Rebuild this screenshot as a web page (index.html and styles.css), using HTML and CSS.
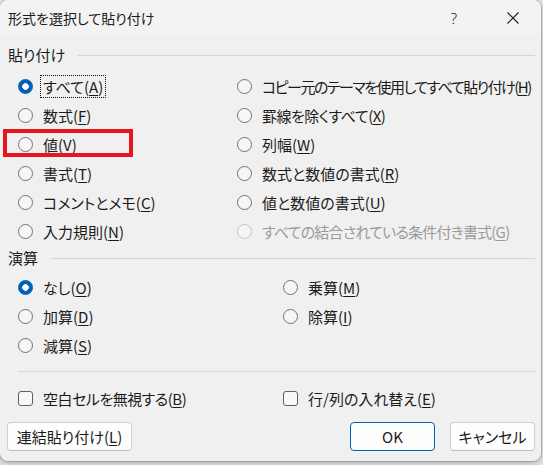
FILE: index.html
```html
<!DOCTYPE html>
<html lang="ja">
<head>
<meta charset="utf-8">
<title>形式を選択して貼り付け</title>
<link rel="stylesheet" href="styles.css">
</head>
<body>
<div class="dialog">
  <div class="titlebar">
    <span class="title">形式を選択して貼り付け</span>
    <span class="help">?</span>
    <span class="close"><svg width="12" height="12" viewBox="0 0 12 12"><path d="M0.5 0.5L11.5 11.5M11.5 0.5L0.5 11.5" stroke="#1a1a1a" stroke-width="1.1" fill="none"/></svg></span>
  </div>
  <div class="content">
    <div class="group-head"><span>貼り付け</span><span class="rule"></span></div>
    <div class="grid paste">
      <div class="opt"><span class="radio on"></span><span class="lbl focus">すべて(<u>A</u>)</span></div>
      <div class="opt"><span class="radio"></span><span class="lbl tightest">コピー元のテーマを使用してすべて貼り付け(<u>H</u>)</span></div>
      <div class="opt"><span class="radio"></span><span class="lbl">数式(<u>F</u>)</span></div>
      <div class="opt"><span class="radio"></span><span class="lbl tight">罫線を除くすべて(<u>X</u>)</span></div>
      <div class="opt"><span class="radio"></span><span class="lbl">値(<u>V</u>)</span></div>
      <div class="opt"><span class="radio"></span><span class="lbl">列幅(<u>W</u>)</span></div>
      <div class="opt"><span class="radio"></span><span class="lbl">書式(<u>T</u>)</span></div>
      <div class="opt"><span class="radio"></span><span class="lbl">数式と数値の書式(<u>R</u>)</span></div>
      <div class="opt"><span class="radio"></span><span class="lbl">コメントとメモ(<u>C</u>)</span></div>
      <div class="opt"><span class="radio"></span><span class="lbl">値と数値の書式(<u>U</u>)</span></div>
      <div class="opt"><span class="radio"></span><span class="lbl">入力規則(<u>N</u>)</span></div>
      <div class="opt disabled"><span class="radio"></span><span class="lbl tighter">すべての結合されている条件付き書式(<u>G</u>)</span></div>
    </div>
    <div class="group-head calc-head"><span>演算</span><span class="rule"></span></div>
    <div class="grid calc">
      <div class="opt"><span class="radio on"></span><span class="lbl">なし(<u>O</u>)</span></div>
      <div class="opt"><span class="radio"></span><span class="lbl">乗算(<u>M</u>)</span></div>
      <div class="opt"><span class="radio"></span><span class="lbl">加算(<u>D</u>)</span></div>
      <div class="opt"><span class="radio"></span><span class="lbl">除算(<u>I</u>)</span></div>
      <div class="opt"><span class="radio"></span><span class="lbl">減算(<u>S</u>)</span></div>
    </div>
    <div class="separator"></div>
    <div class="grid checks">
      <div class="opt"><span class="check"></span><span class="lbl tight">空白セルを無視する(<u>B</u>)</span></div>
      <div class="opt"><span class="check"></span><span class="lbl">行/列の入れ替え(<u>E</u>)</span></div>
    </div>
    <div class="buttons">
      <button class="btn link">連結貼り付け(<u>L</u>)</button>
      <button class="btn ok">OK</button>
      <button class="btn cancel">キャンセル</button>
    </div>
  </div>
  <div class="highlight"></div>
</div>
</body>
</html>
```

FILE: styles.css
```css
html, body {
  margin: 0;
  padding: 0;
}
body {
  width: 543px;
  height: 465px;
  overflow: hidden;
  background: #e4e4e4;
  font-family: "Noto Sans CJK JP", "Noto Sans", sans-serif;
  font-feature-settings: "palt";
  color: #1b1b1b;
}
.dialog {
  position: relative;
  width: 541px;
  height: 461px;
  background: #f0f0f0;
  border-radius: 8px;
  overflow: hidden;
  box-shadow: 0 0 0 1px rgba(0, 0, 0, 0.14), 0 2px 6px rgba(0, 0, 0, 0.25);
  display: flex;
  flex-direction: column;
}
.titlebar {
  height: 35px;
  flex: none;
  background: #f3f3f3;
  display: flex;
  align-items: center;
  padding: 0 5px 0 8px;
  font-size: 14px;
}
.title {
  flex: 1;
  line-height: 20px;
}
.help,
.close {
  width: 46px;
  height: 35px;
  display: flex;
  align-items: center;
  justify-content: center;
}
.help {
  margin-right: 13px;
  font-family: "Noto Sans", sans-serif;
  font-size: 15px;
  font-weight: 300;
}
.content {
  padding: 10px 6px 0 8px;
  font-size: 15px;
}
.group-head {
  display: flex;
  align-items: center;
  gap: 13px;
  height: 20px;
  line-height: 20px;
}
.rule {
  flex: 1;
  height: 1px;
  background: #d5d5d5;
}
.grid {
  display: grid;
  grid-template-columns: 219px 1fr;
  grid-auto-rows: 29px;
  padding-left: 10px;
}
.paste {
  margin-top: 7px;
}
.calc-head {
  margin-top: 2px;
}
.calc {
  margin-top: 5px;
  grid-template-columns: 265px 1fr;
}
.checks {
  margin-top: 12px;
  grid-template-columns: 265px 1fr;
}
.opt {
  display: flex;
  align-items: center;
  gap: 7px;
  white-space: nowrap;
}
.radio {
  flex: none;
  width: 15px;
  height: 15px;
  box-sizing: border-box;
  border: 1px solid #737373;
  border-radius: 50%;
  background: #f6f6f6;
}
.radio.on {
  border-color: #005fb8;
  background: radial-gradient(circle, #ffffff 0 3px, #005fb8 3.6px);
}
.check {
  flex: none;
  width: 15px;
  height: 15px;
  box-sizing: border-box;
  border: 1px solid #5f5f5f;
  border-radius: 3px;
  background: #f8f8f8;
}
.lbl {
  padding: 0 2px;
  line-height: 21px;
  border: 1px solid transparent;
}
.lbl.tight {
  letter-spacing: -0.5px;
}
.lbl.tighter {
  letter-spacing: -0.8px;
}
.lbl.tightest {
  letter-spacing: -1.5px;
}
.lbl.focus {
  border: 1px dotted #111;
}
.lbl u {
  text-underline-offset: 2px;
}
.disabled .radio {
  border-color: #c4c4c4;
  background: #f4f4f4;
}
.disabled .lbl {
  color: #9a9a9a;
}
.separator {
  margin: 11px 0 0 10px;
  height: 1px;
  background: #d5d5d5;
}
.buttons {
  margin-top: 9px;
  margin-left: -1px;
  display: flex;
  gap: 15px;
}
.btn {
  height: 29px;
  box-sizing: border-box;
  padding: 0;
  border: 1px solid #d0d0d0;
  border-bottom-color: #bdbdbd;
  border-radius: 4px;
  background: #fdfdfd;
  font-family: "Noto Sans CJK JP", "Noto Sans", sans-serif;
  font-feature-settings: "palt";
  font-size: 15px;
  color: #1b1b1b;
}
.btn.link {
  width: 125px;
}
.btn.ok {
  width: 85px;
  margin-left: auto;
  border-color: #005fb8;
}
.btn.cancel {
  width: 85px;
}
.btn u {
  text-underline-offset: 2px;
}
.highlight {
  position: absolute;
  left: 3px;
  top: 129px;
  width: 130px;
  height: 28px;
  box-sizing: border-box;
  border: 4px solid #e8161f;
}
```
